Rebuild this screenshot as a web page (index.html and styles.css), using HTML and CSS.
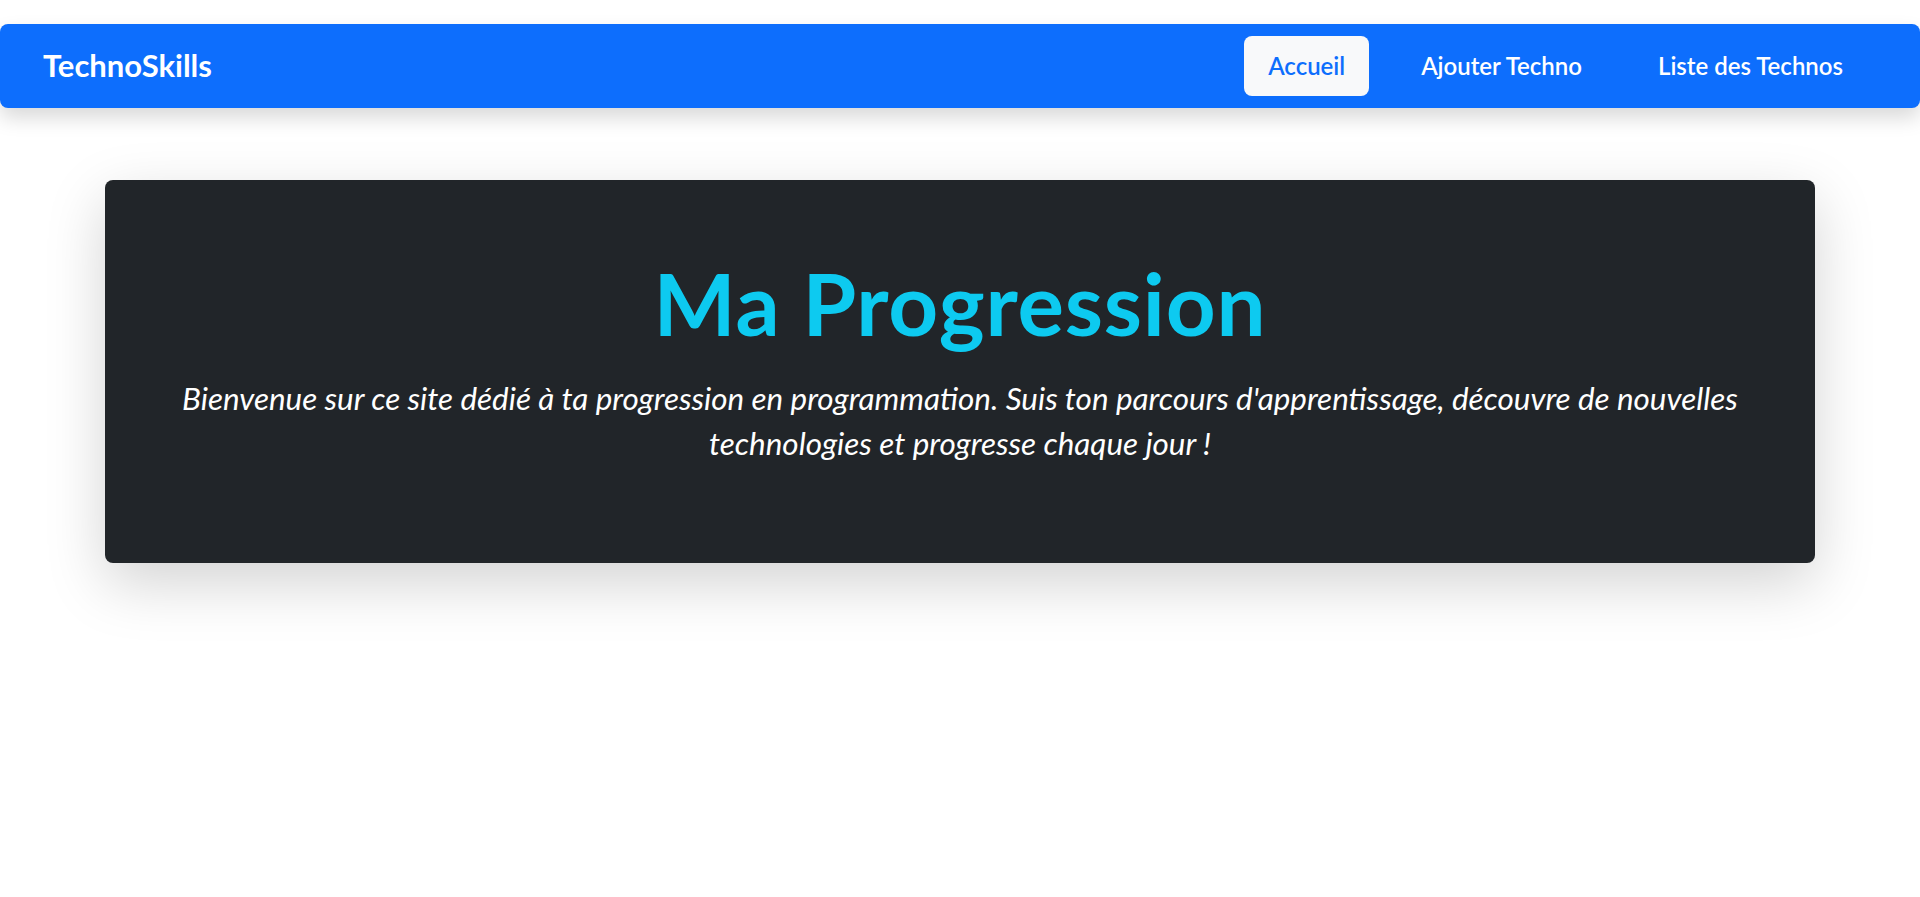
FILE: index.html
```html
<!DOCTYPE html>
<html lang="fr">
<head>
<meta charset="utf-8">
<title>TechnoSkills</title>
<link rel="stylesheet" href="styles.css">
</head>
<body>
<nav class="navbar">
  <a class="brand" href="#">TechnoSkills</a>
  <ul class="nav-links">
    <li><a class="nav-link active" href="#">Accueil</a></li>
    <li><a class="nav-link" href="#">Ajouter Techno</a></li>
    <li><a class="nav-link" href="#">Liste des Technos</a></li>
  </ul>
</nav>
<main class="container">
  <section class="hero">
    <h1 class="hero-title">Ma Progression</h1>
    <p class="hero-lead">Bienvenue sur ce site dédié à ta progression en programmation. Suis ton parcours d'apprentissage, découvre de nouvelles technologies et progresse chaque jour !</p>
  </section>
</main>
</body>
</html>
```
FILE: styles.css
```css
* { box-sizing: border-box; }
body { margin: 0; background: #fff; font-family: Lato, "Open Sans", sans-serif; }
.navbar { margin-top: 24px; height: 84px; background: #0d6efd; border-radius: 8px; display: flex; align-items: center; justify-content: space-between; padding: 0 53px 0 43px; box-shadow: 0 10px 20px rgba(0,0,0,.15); }
.brand { color: #fff; font-weight: 700; font-size: 31px; line-height: 1.2; text-decoration: none; }
.nav-links { list-style: none; display: flex; gap: 28px; margin: 0; padding: 0; }
.nav-link { display: block; padding: 11px 24px; font-size: 24px; line-height: 38px; font-weight: 600; color: #fff; text-decoration: none; border-radius: 8px; }
.nav-link.active { background: #f8f9fa; color: #0d6efd; }
.container { padding: 72px 105px 160px; }
.hero { background: #212529; border-radius: 8px; padding: 71px 60px 77px; text-align: center; box-shadow: 0 20px 60px rgba(0,0,0,.175); }
.hero-title { margin: 0 0 21px; font-size: 87px; line-height: 1.2; letter-spacing: 0.8px; font-weight: 700; color: #0dcaf0; }
.hero-lead { margin: 0 0 20px; font-size: 31.4px; line-height: 45px; font-style: italic; color: #fff; }
```
